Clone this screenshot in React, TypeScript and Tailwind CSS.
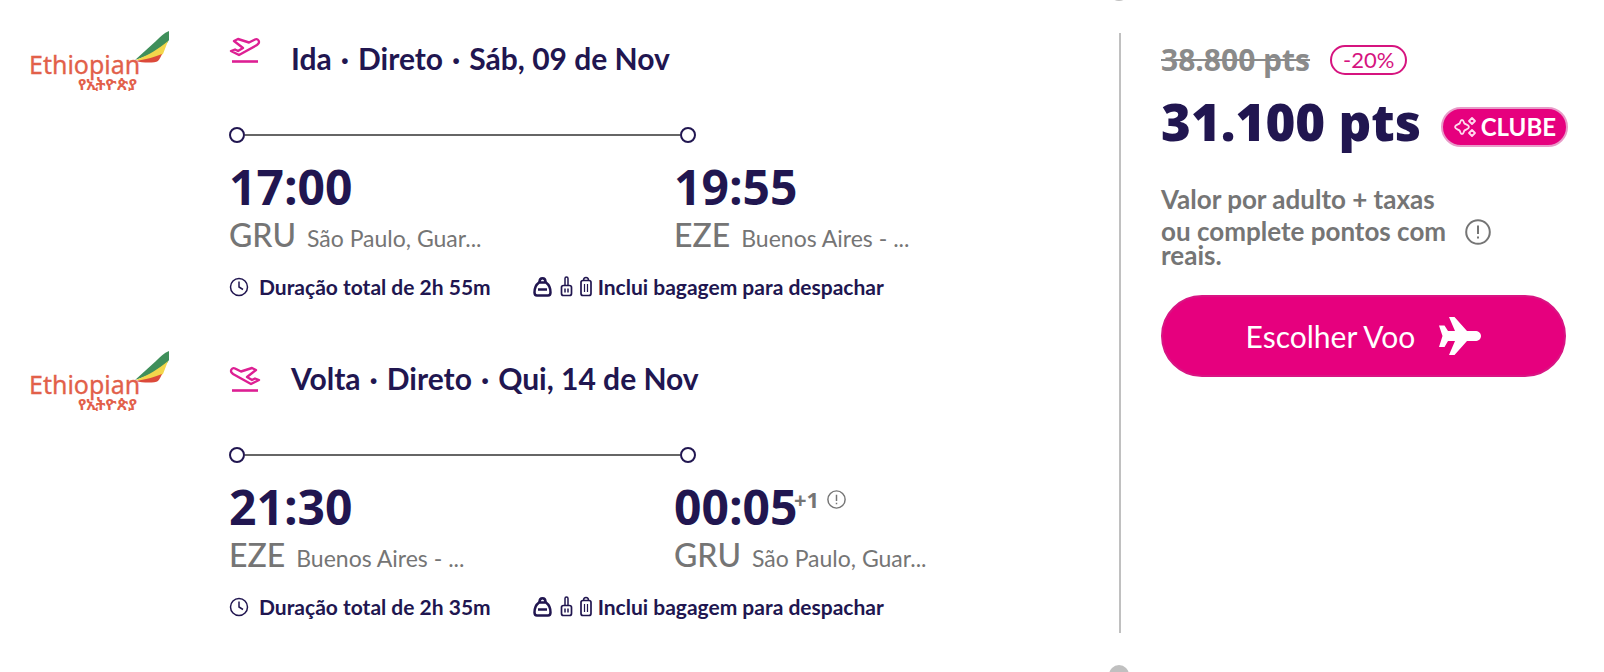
import React from 'react';

interface Stop {
  time: string;
  code: string;
  city: string;
  plusDays?: number;
}

interface Leg {
  kind: 'ida' | 'volta';
  label: string;
  stops: string;
  date: string;
  from: Stop;
  to: Stop;
  duration: string;
}

const legs: Leg[] = [
  {
    kind: 'ida',
    label: 'Ida',
    stops: 'Direto',
    date: 'Sáb, 09 de Nov',
    from: { time: '17:00', code: 'GRU', city: 'São Paulo, Guar...' },
    to: { time: '19:55', code: 'EZE', city: 'Buenos Aires - ...' },
    duration: '2h 55m',
  },
  {
    kind: 'volta',
    label: 'Volta',
    stops: 'Direto',
    date: 'Qui, 14 de Nov',
    from: { time: '21:30', code: 'EZE', city: 'Buenos Aires - ...' },
    to: { time: '00:05', code: 'GRU', city: 'São Paulo, Guar...', plusDays: 1 },
    duration: '2h 35m',
  },
];

const AirlineLogo: React.FC = () => (
  <svg width="144" height="66" viewBox="0 0 144 66" role="img" aria-label="Ethiopian">
    <path d="M140 2C135 4 131 8 127 12L106 31C122 26 136 19 140 11Z" fill="#3f8f5b" />
    <path d="M139 12C129 20 120 26 107 31L112 32C122 31 130 28 134 25Z" fill="#f3d64b" />
    <path d="M133 25C126 28 118 30 107 32C114 34 126 34 129 32C131 30 132 27 133 25Z" fill="#dc4a3a" />
    <text x="0" y="45" fontSize="25" fill="#e2604a" stroke="#e2604a" strokeWidth="0.3" fontFamily="'Noto Sans', sans-serif">Ethiopian</text>
    <text x="49" y="61" fontSize="16" fontWeight="700" fill="#e2604a" fontFamily="'Noto Sans Ethiopic', 'Noto Sans', sans-serif">የኢትዮጵያ</text>
  </svg>
);

const PlaneLine: React.FC<{ kind: Leg['kind'] }> = ({ kind }) => (
  <svg width="32" height="28" viewBox="0 0 32 28" fill="none" stroke="#dd1f93" strokeWidth="2.4" strokeLinejoin="round">
    {kind === 'ida' ? (
      <path d="M2 14L6 12.500L9 14L14 11L5 4L9 2L20 5.500L26 2.500C28 1.500 30 3 30 5C30 6.500 29 7 28 8L10 18Z" />
    ) : (
      <path d="M30 14L26 12.500L23 14L18 11L27 4L23 2L12 5.500L6 2.500C4 1.500 2 3 2 5C2 6.500 3 7 4 8L22 18Z" />
    )}
    <path d="M3 24.500H29" strokeWidth="2.600" />
  </svg>
);

const ClockIcon: React.FC = () => (
  <svg width="20" height="20" viewBox="0 0 20 20" fill="none" stroke="#211650" strokeWidth="1.500">
    <circle cx="10" cy="10" r="8.500" />
    <path d="M10 4.500V10L14 12.500" />
  </svg>
);

const BaggageIcons: React.FC = () => (
  <svg width="60" height="22" viewBox="0 0 60 22" fill="none" stroke="#211650">
    <path d="M6 6.500C2.500 9 1.500 13 1.500 16.500C1.500 18.500 2 19.500 4 19.500H15C17 19.500 17.500 18.500 17.500 16.500C17.500 13 16.500 9 13 6.500Z" strokeWidth="2.500" />
    <path d="M6.500 6C6.500 1 12.500 1 12.500 6" strokeWidth="2.500" />
    <path d="M5 13.500H14" strokeWidth="2.500" />
    <rect x="28.500" y="9.500" width="10" height="10" rx="2" strokeWidth="1.700" />
    <path d="M32 9.500V2.500C32 0.500 35 0.500 35 2.500V9.500" strokeWidth="1.500" />
    <path d="M32 12.500V16.500M35 12.500V16.500" strokeWidth="1.500" />
    <rect x="48" y="4.500" width="10" height="15" rx="2" strokeWidth="1.700" />
    <path d="M50.500 4.500C50.500 0.500 55.500 0.500 55.500 4.500" strokeWidth="1.500" />
    <path d="M51.500 8V16M54.500 8V16" strokeWidth="1.200" />
  </svg>
);

const InfoIcon: React.FC<{ size: number }> = ({ size }) => (
  <svg width={size} height={size} viewBox="0 0 26 26" fill="none" stroke="#757575" strokeWidth="2">
    <circle cx="13" cy="13" r="11.800" />
    <path d="M13 6.500V15M13 17.500V19.500" />
  </svg>
);

const ClubIcon: React.FC = () => (
  <svg width="24" height="22" viewBox="0 0 24 22" fill="none" stroke="#ffd9ee" strokeWidth="1.800" strokeLinejoin="round">
    <path d="M9 4C11 4 10.500 6.500 11.500 7.500C12.500 8.500 16 9 16 11C16 13 12.500 13.500 11.500 14.500C10.500 15.500 11 18 9 18C7 18 7.500 15.500 6.500 14.500C5.500 13.500 2 13 2 11C2 9 5.500 8.500 6.500 7.500C7.500 6.500 7 4 9 4Z" />
    <path d="M19 2L22 5L19 8L16 5ZM19 14L22 17L19 20L16 17Z" />
  </svg>
);

const PlaneSolid: React.FC = () => (
  <svg width="42" height="38" viewBox="0 0 42 38" fill="#fff">
    <path d="M10 0H15.500L28 14H36C39.500 14 42 16 42 19C42 22 39.500 24 36 24H28L15.500 38H10L16 24H9L5.500 30H0L3.500 19L0 8.500H5.500L9 14H16Z" />
  </svg>
);

const StopInfo: React.FC<{ stop: Stop }> = ({ stop }) => (
  <div className="w-[445px] shrink-0">
    <div className="relative w-fit font-['Open_Sans',sans-serif] text-[48px] leading-[48px] font-bold">
      {stop.time}
      {stop.plusDays && (
        <span className="absolute top-1 left-[120px] flex items-center gap-2 text-[22px] leading-6 text-[#757575]">
          +{stop.plusDays}
          <InfoIcon size={19} />
        </span>
      )}
    </div>
    <div className="mt-[2px] flex items-baseline gap-[11px] leading-[44px] text-[#757575]">
      <span className="text-[32px] font-medium">{stop.code}</span>
      <span className="text-[23px]">{stop.city}</span>
    </div>
  </div>
);

const LegRow: React.FC<{ leg: Leg }> = ({ leg }) => (
  <section className="flex">
    <div className="w-[200px] shrink-0">
      <AirlineLogo />
    </div>
    <div className="flex-1">
      <div className="flex gap-[30px]">
        <div className={leg.kind === 'ida' ? 'pt-2' : 'pt-[17px]'}>
          <PlaneLine kind={leg.kind} />
        </div>
        <h2 className="flex h-[49px] gap-[9px] pt-[9px] text-[30px] leading-10 font-bold">
          <span>{leg.label}</span>
          <span>·</span>
          <span>{leg.stops}</span>
          <span>·</span>
          <span>{leg.date}</span>
        </h2>
      </div>

      {/* Route line */}
      <div className="mt-[49px] flex w-[467px] items-center">
        <span className="size-4 rounded-full border-2 border-[#211650]" />
        <span className="h-[2px] flex-1 bg-[#666]" />
        <span className="size-4 rounded-full border-2 border-[#211650]" />
      </div>

      <div className="mt-5 flex">
        <StopInfo stop={leg.from} />
        <StopInfo stop={leg.to} />
      </div>

      <div className="mt-[13px] flex items-center gap-[42px] text-[21px] leading-7 font-bold">
        <p className="flex items-center gap-[10px]">
          <ClockIcon />
          Duração total de {leg.duration}
        </p>
        <p className="flex items-center gap-[5px]">
          <BaggageIcons />
          Inclui bagagem para despachar
        </p>
      </div>
    </div>
  </section>
);

export default function App() {
  return (
    <main className="relative flex min-h-screen overflow-hidden bg-white pt-[33px] pb-[39px] font-['Lato',sans-serif] text-[#211650]">
      <div className="-mt-1 flex min-w-0 flex-1 flex-col gap-12 pl-[29px]">
        {legs.map((leg) => (
          <LegRow key={leg.kind} leg={leg} />
        ))}
      </div>

      <aside className="w-[485px] shrink-0 border-l-2 border-[#c0c0c0] pt-[11px] pr-[38px] pl-10">
        <div className="flex items-center gap-5">
          <s className="font-['Open_Sans',sans-serif] text-[30px] leading-8 font-bold text-[#8a8a8a] decoration-2">38.800 pts</s>
          <span className="rounded-full border-2 border-[#d6147f] px-[11px] text-[22px] leading-[26px] text-[#d6147f]">-20%</span>
        </div>
        <div className="-mr-[2px] mt-3 flex items-center justify-between">
          <strong className="font-['Open_Sans',sans-serif] text-[51px] leading-[66px] font-extrabold">31.100 pts</strong>
          <span className="mt-3 flex h-10 items-center gap-1 rounded-full border-2 border-[#e89bc8] bg-[#e6007e] px-[10px] text-2xl font-bold text-white">
            <ClubIcon />
            CLUBE
          </span>
        </div>
        <div className="mt-[33px] text-[26px] leading-6 font-bold text-[#757575]">
          <p>Valor por adulto + taxas</p>
          <div className="mt-2 flex items-start gap-3">
            <p className="w-[292px]">ou complete pontos com reais.</p>
            <InfoIcon size={26} />
          </div>
        </div>
        <button className="mt-7 flex h-[82px] w-full items-center justify-center gap-6 rounded-full border-2 border-[#d81583] bg-[#e6007e] text-[30px] text-white">
          Escolher Voo
          <PlaneSolid />
        </button>
      </aside>

      {/* Ticket notches at both ends of the divider */}
      <span className="absolute -top-[19px] right-[475px] size-5 rounded-full bg-[#c0c0c0]" />
      <span className="absolute -bottom-[13px] right-[475px] size-5 rounded-full bg-[#c0c0c0]" />
    </main>
  );
}
